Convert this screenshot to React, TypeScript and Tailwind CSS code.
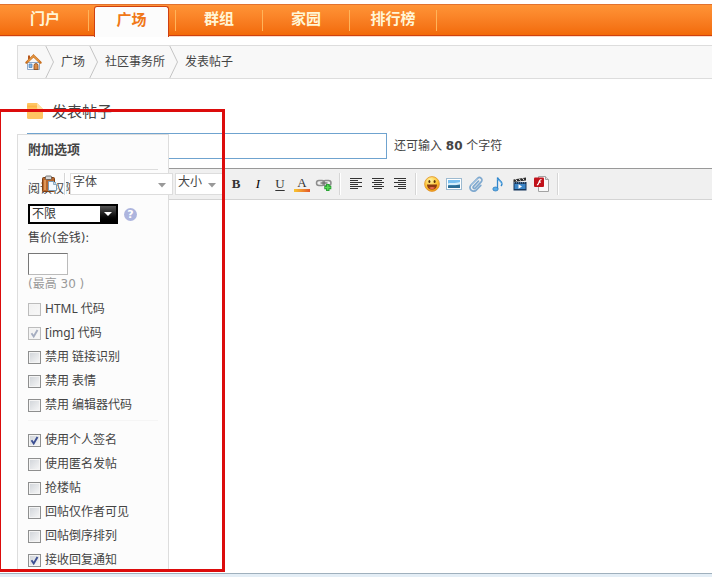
import React from 'react';

const NAV_ITEMS = ['门户', '广场', '群组', '家园', '排行榜'];

const BREADCRUMBS = ['广场', '社区事务所', '发表帖子'];

interface Option {
  id: string;
  label: string;
  checked?: boolean;
  disabled?: boolean;
}

const CODE_OPTIONS: Option[] = [
  { id: 'html', label: 'HTML 代码', disabled: true },
  { id: 'img', label: '[img] 代码', checked: true, disabled: true },
  { id: 'nolink', label: '禁用 链接识别' },
  { id: 'nosmile', label: '禁用 表情' },
  { id: 'nocode', label: '禁用 编辑器代码' },
];

const POST_OPTIONS: Option[] = [
  { id: 'sign', label: '使用个人签名', checked: true },
  { id: 'anonymous', label: '使用匿名发帖' },
  { id: 'rush', label: '抢楼帖' },
  { id: 'authoronly', label: '回帖仅作者可见' },
  { id: 'reverse', label: '回帖倒序排列' },
  { id: 'notify', label: '接收回复通知', checked: true },
];

function HomeIcon() {
  return (
    <svg viewBox="0 0 17 17" className="h-[17px] w-[17px]">
      <path d="M2.500 8.500h12v7h-12z" fill="#f4f7fb" stroke="#8fa9c8" />
      <path d="M3 1.500h2v4H3z" fill="#b5561c" />
      <path d="M8.500 1.800L1.500 8.600M8.500 1.800L15.500 8.600" stroke="#c9701f" strokeWidth="2.400" strokeLinecap="round" />
      <path d="M8.500 2L2.500 7.900M8.500 2L14.500 7.900" stroke="#f6b25a" strokeWidth="1" />
      <path d="M4 10h3v3.500H4z" fill="#7fb4e6" stroke="#4f7fb5" strokeWidth=".7" />
      <path d="M9 15.500v-4a2 2 0 0 1 4 0v4z" fill="#d98a45" stroke="#8a4a18" strokeWidth=".8" />
    </svg>
  );
}

function Chevron() {
  return (
    <svg viewBox="0 0 10 32" className="h-8 w-[10px] shrink-0" fill="none">
      <path d="M.8 0L8.500 16L.8 32" stroke="#c4c4c4" />
    </svg>
  );
}

function FolderIcon() {
  return (
    <svg viewBox="0 0 18 18" className="h-[18px] w-[18px]">
      <path d="M2 1h9l6 6v8.500a1.500 1.500 0 0 1-1.500 1.500h-13A1.500 1.500 0 0 1 1 15.500V2a1 1 0 0 1 1-1z" fill="#ffc562" />
      <path d="M11 1v5a1 1 0 0 0 1 1h5z" fill="#ffdf9e" />
      <path d="M1 3.500h10v2H1z" fill="#ffb547" />
    </svg>
  );
}

function PasteIcon() {
  return (
    <svg viewBox="0 0 18 18" className="h-[18px] w-[18px]">
      <rect x="2.500" y="2.500" width="12" height="14" rx="1" fill="#b8672b" stroke="#7d3f13" />
      <rect x="5.500" y="1" width="6" height="3.500" rx="1" fill="#d8d8d8" stroke="#555" strokeWidth=".8" />
      <path d="M4 5h2v10H4z" fill="#dd9656" />
      <path d="M8.500 6.500h5l3 3v6h-8z" fill="#f5fafe" stroke="#7a9ab5" />
      <path d="M13.500 6.500v3h3" fill="#c6dcec" stroke="#7a9ab5" strokeWidth=".8" />
    </svg>
  );
}

function LinkIcon() {
  return (
    <svg viewBox="0 0 18 16" className="h-4 w-[18px]" fill="none">
      <rect x="1.500" y="4.500" width="8" height="5" rx="2.500" stroke="#8d8d8d" strokeWidth="1.500" />
      <rect x="8" y="4.500" width="8" height="5" rx="2.500" stroke="#8d8d8d" strokeWidth="1.500" />
      <path d="M5.500 7h7" stroke="#6f6f6f" strokeWidth="1.300" />
      <path d="M12.800 8v7M9.300 11.500h7" stroke="#1f9b2c" strokeWidth="3.400" />
      <path d="M12.800 8.700v5.600M10 11.500h5.600" stroke="#5ddb57" strokeWidth="1.400" />
    </svg>
  );
}

function AlignIcon({ d }: { d: string }) {
  return (
    <svg viewBox="0 0 12 12" className="h-3 w-3">
      <path d={d} stroke="#333" />
    </svg>
  );
}

function SmileIcon() {
  return (
    <svg viewBox="0 0 16 16" className="h-4 w-4">
      <defs>
        <radialGradient id="face" cx=".4" cy=".25" r=".8">
          <stop offset="0" stopColor="#fff2a0" />
          <stop offset=".6" stopColor="#fcc332" />
          <stop offset="1" stopColor="#ee8f14" />
        </radialGradient>
      </defs>
      <circle cx="8" cy="8" r="7.400" fill="url(#face)" stroke="#e0932a" strokeWidth=".8" />
      <ellipse cx="5.400" cy="5.500" rx="1" ry="1.500" fill="#5a3208" />
      <ellipse cx="10.600" cy="5.500" rx="1" ry="1.500" fill="#5a3208" />
      <path d="M3 8.500h10c0 3-2 5-5 5s-5-2-5-5z" fill="#8c3a10" />
      <path d="M5 11.800c1.800-1 4.200-1 6 0-1.600 1.600-4.400 1.600-6 0z" fill="#f06b50" />
    </svg>
  );
}

function ImageIcon() {
  return (
    <svg viewBox="0 0 16 12" className="h-3 w-4">
      <rect x=".5" y=".5" width="15" height="11" fill="#fff" stroke="#9dbad0" />
      <path d="M2 2h12v8H2z" fill="#77bff0" />
      <path d="M2 5.500c3-1.500 5 .5 12-1.500v3H2z" fill="#d5effc" />
      <path d="M2 10V7.500c3-1 6 .5 12-1V10z" fill="#2b6d95" />
    </svg>
  );
}

function ClipIcon() {
  return (
    <svg viewBox="0 0 16 16" className="h-4 w-4" fill="none">
      <path
        d="M10.500 5.200l-5 5.200a1.200 1.200 0 0 0 1.700 1.700l6-6.200a2.500 2.500 0 0 0-3.600-3.600L3 9a3.600 3.600 0 0 0 5.200 5.100l4.600-4.800"
        stroke="#7fa9cf"
        strokeWidth="1.700"
        strokeLinecap="round"
      />
      <path d="M9.800 2.500L3.200 9.200" stroke="#b9d6ee" strokeWidth=".7" />
    </svg>
  );
}

function NoteIcon() {
  return (
    <svg viewBox="0 0 12 16" className="h-4 w-3" fill="none">
      <path d="M5.500 13V1.500c.5 2.500 5 3.500 4.500 6.500-.2 1-.6 1.500-1 2" stroke="#2f86cc" strokeWidth="1.300" />
      <path d="M5.500 3.500c1 1.500 4 2 4 4.500" stroke="#68b5ee" />
      <ellipse cx="3.500" cy="13" rx="2.700" ry="2" fill="#58aeea" stroke="#2473b5" strokeWidth=".7" />
    </svg>
  );
}

function VideoIcon() {
  return (
    <svg viewBox="0 0 14 14" className="h-[14px] w-[14px]">
      <path d="M.5 2.500L13 .5v3L.5 5z" fill="#2b2b2b" />
      <path d="M2.500 2.200l1.500 2M6 1.600l1.500 2M9.500 1.100l1.500 2" stroke="#eee" />
      <path d="M.5 5h13v8.500H.5z" fill="#17375c" />
      <path d="M1.500 7h11v5h-11z" fill="#3c86c8" />
      <path d="M5.500 7.300v4.400l3.500-2.200z" fill="#fff" />
      <path d="M1 5.800h12" stroke="#9bb4cc" strokeWidth=".8" strokeDasharray="1 1" />
    </svg>
  );
}

function FlashIcon() {
  return (
    <svg viewBox="0 0 16 16" className="h-4 w-4">
      <path d="M4.500.5h7l3 3v12h-10z" fill="#fafafa" stroke="#a3a3a3" />
      <path d="M11.500.5v3h3" fill="#ddd" stroke="#a3a3a3" />
      <rect x="0" y="1.500" width="10" height="9.500" rx="1" fill="#c1121b" />
      <path d="M7.500 3.500c-2 0-2.200 1.500-2.600 3S4.200 8.900 2.900 8.900M4.700 6.200h2.200" stroke="#fff" strokeWidth="1.200" fill="none" />
    </svg>
  );
}

const FORMAT_TOOLS = [
  { name: '粗体', icon: <b className="text-[13px]">B</b> },
  { name: '斜体', icon: <i className="text-[13px] text-black">I</i> },
  { name: '下划线', icon: <span className="text-[13px] underline underline-offset-2">U</span> },
  {
    name: '文字颜色',
    icon: (
      <span className="flex flex-col items-center text-[13px] leading-3">
        A
        <span className="h-[3px] w-4 bg-linear-to-r from-[#f7c52f] to-[#e2562b]" />
      </span>
    ),
  },
  { name: '添加链接', icon: <LinkIcon /> },
];

const ALIGN_TOOLS = [
  { name: '左对齐', icon: <AlignIcon d="M0 .5h12M0 2.500h8M0 4.500h12M0 6.500h8M0 8.500h12M0 10.500h8" /> },
  { name: '居中', icon: <AlignIcon d="M0 .5h12M2 2.500h8M0 4.500h12M2 6.500h8M0 8.500h12M2 10.500h8" /> },
  { name: '右对齐', icon: <AlignIcon d="M0 .5h12M4 2.500h8M0 4.500h12M4 6.500h8M0 8.500h12M4 10.500h8" /> },
];

const MEDIA_TOOLS = [
  { name: '表情', icon: <SmileIcon /> },
  { name: '图片', icon: <ImageIcon /> },
  { name: '附件', icon: <ClipIcon /> },
  { name: '音乐', icon: <NoteIcon /> },
  { name: '视频', icon: <VideoIcon /> },
  { name: 'Flash', icon: <FlashIcon /> },
];

function ToolGroup({ tools }: { tools: { name: string; icon: React.ReactNode }[] }) {
  return (
    <div className="flex font-['Liberation_Serif',serif] text-[#333]">
      {tools.map((tool) => (
        <button key={tool.name} type="button" aria-label={tool.name} className="flex h-[22px] w-[22px] items-center justify-center">
          {tool.icon}
        </button>
      ))}
    </div>
  );
}

function Separator() {
  return <span className="mx-1 h-[22px] w-[2px] shrink-0 border-l border-[#d6d6d6] bg-white" />;
}

function ToolSelect({ label, className }: { label: string; className: string }) {
  return (
    <div className={`relative ${className}`}>
      <select aria-label={label} className="h-[22px] w-full appearance-none border border-[#ddd] bg-white pb-1 pl-[2px] text-xs leading-4 text-[#444]">
        <option>{label}</option>
      </select>
      <svg viewBox="0 0 8 5" className="pointer-events-none absolute right-[7px] top-[10px] h-[5px] w-2">
        <path d="M0 0h8L4 4.500z" fill="#999" />
      </svg>
    </div>
  );
}

function CheckOption({ option }: { option: Option }) {
  return (
    <li className="flex h-6 items-center gap-1">
      <span className="relative h-[13px] w-[13px]">
        <input
          id={option.id}
          type="checkbox"
          defaultChecked={option.checked}
          disabled={option.disabled}
          className="peer block h-[13px] w-[13px] appearance-none border border-[#8e8f8f] bg-linear-to-br from-[#cfd3d8] to-[#f8f8f8] shadow-[inset_0_0_0_1px_#f4f4f4] disabled:border-[#bcbcbc] disabled:from-[#f0f0f0]"
        />
        <svg viewBox="0 0 13 13" className="pointer-events-none absolute inset-0 hidden text-[#3c4f92] peer-checked:block peer-disabled:text-[#a5adc0]" fill="none">
          <path d="M3.500 6.300l2.200 3.200L9.500 3" stroke="currentColor" strokeWidth="1.900" />
        </svg>
      </span>
      <label htmlFor={option.id}>{option.label}</label>
    </li>
  );
}

function OptionsPanel() {
  return (
    <aside className="absolute left-[17px] top-px z-10 w-[152px] border border-b-0 border-[#ddd] bg-[#fcfcfc] px-[10px] text-xs leading-4 text-[#444]">
      <h2 className="h-[35px] border-b border-[#ddd] pt-[6px] text-[13px] font-bold leading-4">附加选项</h2>
      <div className="pt-[11px] font-['DejaVu_Sans','Noto_Sans_CJK_SC',sans-serif]">
        <label htmlFor="readperm" className="block">阅读权限</label>
        <div className="mt-[7px] flex items-center gap-[6px]">
          <div className="relative w-[90px]">
            <select id="readperm" className="block h-5 w-full appearance-none border-2 border-black bg-white pl-[2px] text-xs leading-4 text-[#333]">
              <option>不限</option>
            </select>
            <span className="pointer-events-none absolute bottom-[2px] right-[2px] top-[2px] flex w-4 items-center justify-center bg-linear-to-b from-[#555] to-black">
              <svg viewBox="0 0 8 4" className="h-1 w-2">
                <path d="M0 0h8L4 4z" fill="#fff" />
              </svg>
            </span>
          </div>
          <button type="button" aria-label="帮助" className="h-[13px] w-[13px] rounded-full bg-[#adb5de] text-[11px] font-bold leading-[13px] text-white">
            ?
          </button>
        </div>
        <label htmlFor="price" className="mt-[6px] block">售价(金钱):</label>
        <input id="price" type="text" className="mt-[7px] block h-[22px] w-10 border border-[#bbb] border-l-[#777] border-t-[#777] bg-white px-1" />
        <p className="mt-px text-[#999]">(最高 30 )</p>
      </div>
      <ul className="mt-[5px] border-b border-[#f5f5f5] pb-[3px]">
        {CODE_OPTIONS.map((option) => (
          <CheckOption key={option.id} option={option} />
        ))}
      </ul>
      <ul className="pt-[7px]">
        {POST_OPTIONS.map((option) => (
          <CheckOption key={option.id} option={option} />
        ))}
      </ul>
    </aside>
  );
}

function NavBar() {
  return (
    <header className="pt-1">
      <nav className="border-b border-t border-b-[#cf4010] border-t-[#e2722e] bg-linear-to-b from-[#ff9436] to-[#f26a06] shadow-[0_1px_0_#fbdcc8]">
        <ul className="flex h-[30px] pl-[2px] text-[15px] font-bold leading-[26px]">
          {NAV_ITEMS.map((item) => (
            <li key={item} className="flex w-[87px] text-center">
              {item === '广场' ? (
                <a href="#" className="ml-[5px] mr-[6px] mt-px h-[31px] flex-1 rounded-t-[3px] border border-b-0 border-[#cf4010] bg-[#fcfcfc] leading-6 text-[#f07818]">
                  {item}
                </a>
              ) : (
                <a href="#" className="flex-1 text-[#fff6d6]">{item}</a>
              )}
              <span className="mt-[5px] h-[21px] w-px bg-[#ffb45a]" />
            </li>
          ))}
        </ul>
      </nav>
    </header>
  );
}

export default function App() {
  return (
    <div className="relative flex min-h-screen flex-col bg-white font-['Noto_Sans','Noto_Sans_CJK_SC',sans-serif] text-xs text-[#444]">
      <NavBar />

      <nav aria-label="位置" className="ml-[17px] mt-[9px] flex h-[34px] items-center border border-r-0 border-[#ddd] bg-[#f8f8f8]">
        <a href="#" aria-label="首页" className="ml-[7px] mr-[3px]">
          <HomeIcon />
        </a>
        {BREADCRUMBS.map((crumb) => (
          <React.Fragment key={crumb}>
            <Chevron />
            <a href="#" className="ml-[6px] mr-1 leading-4">{crumb}</a>
          </React.Fragment>
        ))}
      </nav>

      <h1 className="ml-[26px] mt-[22px] flex h-5 items-center gap-2 text-[15px] leading-5">
        <FolderIcon />
        发表帖子
      </h1>

      <main className="relative mt-3 flex flex-1 flex-col">
        <OptionsPanel />
        <div className="ml-[27px] flex items-center gap-[7px]">
          <input type="text" aria-label="标题" className="h-[26px] w-[360px] border border-[#6fa3cf] bg-white px-2" />
          <p className="font-['DejaVu_Sans','Noto_Sans_CJK_SC',sans-serif]">
            还可输入 <b>80</b> 个字符
          </p>
        </div>
        <div className="ml-[27px] mt-[9px] flex h-8 items-center border-b border-t border-b-[#d4d4d4] border-t-[#999] bg-[#f0f0f0] pl-[11px]">
          <div className="relative z-20 flex items-center">
            <button type="button" aria-label="粘贴" className="flex h-[22px] w-[22px] items-center justify-center">
              <PasteIcon />
            </button>
            <Separator />
            <ToolSelect label="字体" className="w-[103px]" />
            <ToolSelect label="大小" className="mx-[2px] w-12" />
          </div>
          <ToolGroup tools={FORMAT_TOOLS} />
          <Separator />
          <ToolGroup tools={ALIGN_TOOLS} />
          <Separator />
          <ToolGroup tools={MEDIA_TOOLS} />
          <Separator />
        </div>
        <textarea aria-label="内容" className="ml-[27px] flex-1 resize-none bg-white p-2" />
      </main>

      <footer className="h-1 border-t border-[#9fb0bd] bg-[#e4eef6]" />

      <div className="pointer-events-none absolute bottom-[5px] left-0 top-[109px] z-30 w-[225px] border-[3px] border-l border-[#dc0c0c]" />
    </div>
  );
}
